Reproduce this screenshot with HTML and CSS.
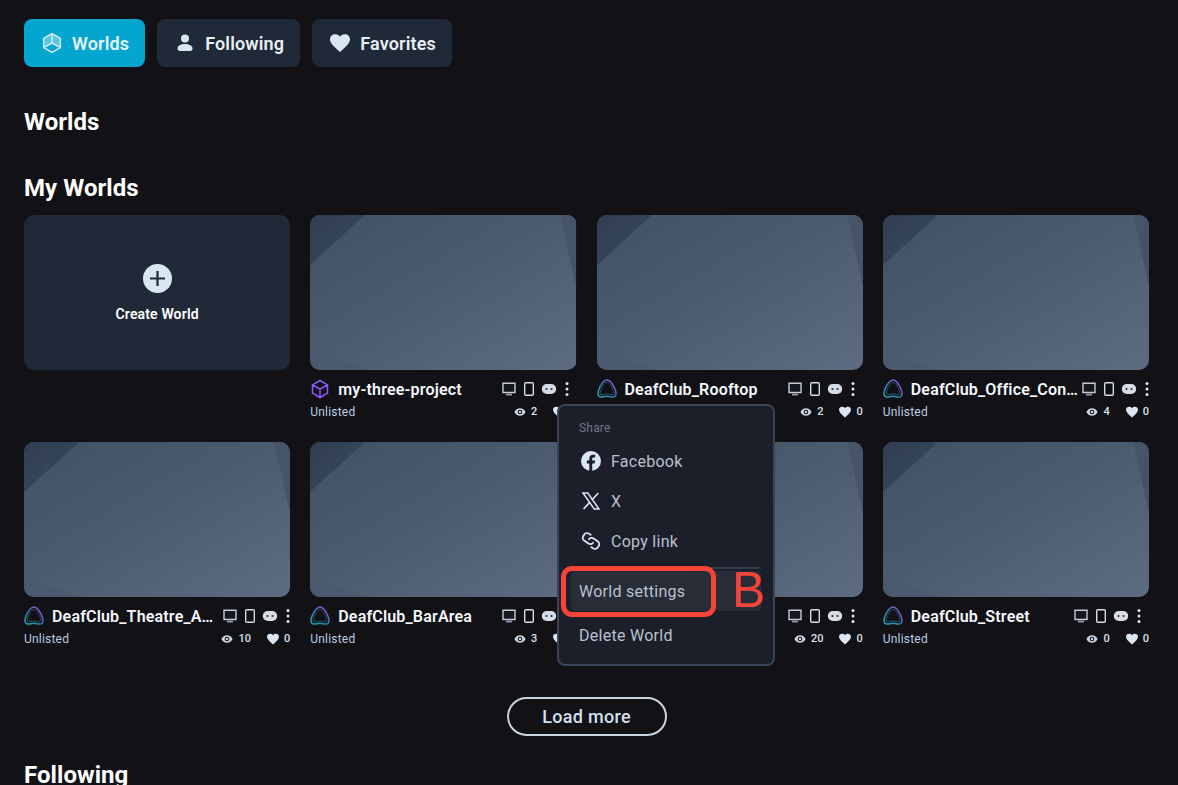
FILE: index.html
```html
<!DOCTYPE html>
<html lang="en">
<head>
    <meta charset="UTF-8">
    <meta name="viewport" content="width=device-width, initial-scale=1.0">
    <title>Worlds</title>
    <link rel="stylesheet" href="styles.css">
</head>
<body>
    <svg class="defs" width="0" height="0" aria-hidden="true">
        <defs>
            <linearGradient id="thumbFill" x1="0" y1="0" x2="1" y2="1">
                <stop offset="0" stop-color="#415062"/>
                <stop offset="0.45" stop-color="#4b5a6c"/>
                <stop offset="1" stop-color="#5e6c82"/>
            </linearGradient>
            <linearGradient id="cornerFill" x1="0" y1="0" x2="1" y2="1">
                <stop offset="0" stop-color="#313e52"/>
                <stop offset="1" stop-color="#3a495c"/>
            </linearGradient>
            <linearGradient id="logoFill" x1="0" y1="1" x2="1" y2="0">
                <stop offset="0" stop-color="#1fa8b8"/>
                <stop offset="0.5" stop-color="#3a7cb0"/>
                <stop offset="1" stop-color="#9a50d8"/>
            </linearGradient>
        </defs>
        <symbol id="thumb" viewBox="0 0 266 155" preserveAspectRatio="none">
            <rect width="266" height="155" fill="url(#thumbFill)"/>
            <polygon points="0,0 55,0 0,50" fill="url(#cornerFill)"/>
            <polygon points="250,0 266,0 266,73" fill="#46546a"/>
            <polygon points="0,135 56,155 0,155" fill="#4a596e"/>
        </symbol>
        <symbol id="logo" viewBox="0 0 20 20">
            <path d="M10 1C6.500 1 4.800 4.500 2.800 8.300 1 11.700 0 15 2 17.300c2 2 5-.1 8-.1s6 2.100 8 .1c2-2.300 1-5.600-.8-9C15.200 4.500 13.500 1 10 1z" fill="none" stroke="url(#logoFill)" stroke-width="1.500"/>
            <path d="M10 3.500C7.500 3.500 6.200 6.500 4.600 9.500 3.300 12 2.600 14 3.600 15.300c1.500 1.200 4-.3 6.400-.3s4.900 1.500 6.400.3c1-1.300.3-3.300-1-5.800C13.800 6.500 12.500 3.500 10 3.500z" fill="none" stroke="url(#logoFill)" stroke-width="0.800" stroke-opacity="0.7"/>
        </symbol>
        <symbol id="cube" viewBox="0 0 20 20">
            <path d="M10 1.500l7.500 4.300v8.400L10 18.500l-7.500-4.300V5.800z M2.500 5.800L10 10l7.500-4.200 M10 10v8.500" fill="none" stroke="#8b5cf6" stroke-width="1.500" stroke-linejoin="round"/>
        </symbol>
        <symbol id="monitor" viewBox="0 0 16 16">
            <path d="M2 2.200h12v9.300H2z" fill="#16181f" stroke="#c3ccd8" stroke-width="1.400"/>
            <path d="M5 12.600h6v1.900H5z" fill="#8d96a3"/>
        </symbol>
        <symbol id="phone" viewBox="0 0 16 16">
            <rect x="3.700" y="1.700" width="8.600" height="12.600" rx="1.200" fill="#0d0e13" stroke="#d5dce6" stroke-width="1.400"/>
        </symbol>
        <symbol id="headset" viewBox="0 0 16 16">
            <rect x="0.800" y="3" width="14.400" height="10" rx="5" fill="#d5dce6"/>
            <circle cx="5.500" cy="8" r="1.100" fill="#2b3340"/>
            <circle cx="10.500" cy="8" r="1.100" fill="#2b3340"/>
        </symbol>
        <symbol id="dots" viewBox="0 0 4 16">
            <circle cx="2" cy="2.500" r="1.500" fill="#e2e8f0"/>
            <circle cx="2" cy="8" r="1.500" fill="#e2e8f0"/>
            <circle cx="2" cy="13.500" r="1.500" fill="#e2e8f0"/>
        </symbol>
        <symbol id="eye" viewBox="0 0 12 12">
            <path d="M6 2.300C3.500 2.300 1.400 3.800.4 6c1 2.200 3.100 3.700 5.600 3.700s4.600-1.500 5.600-3.700c-1-2.200-3.100-3.700-5.600-3.700zm0 6a2.300 2.300 0 1 1 0-4.600 2.300 2.300 0 0 1 0 4.600zM6 4.700a1.300 1.300 0 1 0 0 2.600 1.300 1.300 0 0 0 0-2.600z" fill="#cbd5e1"/>
        </symbol>
        <symbol id="heart" viewBox="1 1 22 21">
            <path d="M12 21.500l-1.600-1.450C4.800 15 1 11.600 1 7.500 1 4.200 3.600 2 6.800 2c1.900 0 3.800.9 5.200 2.500C13.400 2.900 15.300 2 17.200 2 20.400 2 23 4.200 23 7.500c0 4.100-3.800 7.500-9.400 12.550z" fill="#dbe6f3"/>
        </symbol>
    </svg>

    <div class="page">
        <nav class="tabs">
            <a class="tab active">
                <svg class="tab-icon" viewBox="1 1 18 18">
                    <path d="M10 10V1.500l7.500 4.300v8.400zM10 10V1.500L2.500 5.800v8.400z" fill="#ffffff" fill-opacity="0.35"/>
                    <path d="M10 1.500l7.500 4.300v8.400L10 18.500l-7.500-4.300V5.800z M2.500 14.200L10 10l7.500 4.200 M10 10V1.500" fill="none" stroke="#cfeaf5" stroke-width="1.300" stroke-linejoin="round"/>
                </svg>
                Worlds
            </a>
            <a class="tab">
                <svg class="tab-icon" viewBox="0 0 20 20">
                    <circle cx="10" cy="5.500" r="4" fill="#dbe6f3"/>
                    <path d="M2.500 15.500c0-3 3.500-4.500 7.500-4.500s7.500 1.500 7.500 4.500c0 2-1.500 2.500-3 2.500h-9c-1.500 0-3-.5-3-2.500z" fill="#dbe6f3"/>
                </svg>
                Following
            </a>
            <a class="tab">
                <svg class="tab-icon"><use href="#heart"/></svg>
                Favorites
            </a>
        </nav>

        <h2 class="heading first">Worlds</h2>
        <h2 class="heading">My Worlds</h2>

        <div class="grid">
            <div class="card">
                <div class="create">
                    <svg class="plus" viewBox="0 0 29 29">
                        <circle cx="14.500" cy="14.500" r="14.500" fill="#dbe6f3"/>
                        <path d="M14.500 7v15M7 14.500h15" stroke="#1f2937" stroke-width="2.200"/>
                    </svg>
                    <span>Create World</span>
                </div>
            </div>

            <div class="card">
                <svg class="thumb"><use href="#thumb"/></svg>
                <div class="title-row">
                    <svg class="world-icon"><use href="#cube"/></svg>
                    <span class="title">my-three-project</span>
                    <span class="devices">
                        <svg><use href="#monitor"/></svg>
                        <svg><use href="#phone"/></svg>
                        <svg><use href="#headset"/></svg>
                    </span>
                    <svg class="dots"><use href="#dots"/></svg>
                </div>
                <div class="sub-row">
                    <span class="status">Unlisted</span>
                    <span class="stat"><svg><use href="#eye"/></svg>2</span>
                    <span class="stat"><svg><use href="#heart"/></svg>0</span>
                </div>
            </div>

            <div class="card">
                <svg class="thumb"><use href="#thumb"/></svg>
                <div class="title-row">
                    <svg class="world-icon"><use href="#logo"/></svg>
                    <span class="title">DeafClub_Rooftop</span>
                    <span class="devices">
                        <svg><use href="#monitor"/></svg>
                        <svg><use href="#phone"/></svg>
                        <svg><use href="#headset"/></svg>
                    </span>
                    <svg class="dots"><use href="#dots"/></svg>
                </div>
                <div class="sub-row">
                    <span class="status">Unlisted</span>
                    <span class="stat"><svg><use href="#eye"/></svg>2</span>
                    <span class="stat"><svg><use href="#heart"/></svg>0</span>
                </div>
            </div>

            <div class="card">
                <svg class="thumb"><use href="#thumb"/></svg>
                <div class="title-row tight">
                    <svg class="world-icon"><use href="#logo"/></svg>
                    <span class="title">DeafClub_Office_Con…</span>
                    <span class="devices">
                        <svg><use href="#monitor"/></svg>
                        <svg><use href="#phone"/></svg>
                        <svg><use href="#headset"/></svg>
                    </span>
                    <svg class="dots"><use href="#dots"/></svg>
                </div>
                <div class="sub-row">
                    <span class="status">Unlisted</span>
                    <span class="stat"><svg><use href="#eye"/></svg>4</span>
                    <span class="stat"><svg><use href="#heart"/></svg>0</span>
                </div>
            </div>

            <div class="card">
                <svg class="thumb"><use href="#thumb"/></svg>
                <div class="title-row tight">
                    <svg class="world-icon"><use href="#logo"/></svg>
                    <span class="title">DeafClub_Theatre_A…</span>
                    <span class="devices">
                        <svg><use href="#monitor"/></svg>
                        <svg><use href="#phone"/></svg>
                        <svg><use href="#headset"/></svg>
                    </span>
                    <svg class="dots"><use href="#dots"/></svg>
                </div>
                <div class="sub-row">
                    <span class="status">Unlisted</span>
                    <span class="stat"><svg><use href="#eye"/></svg>10</span>
                    <span class="stat"><svg><use href="#heart"/></svg>0</span>
                </div>
            </div>

            <div class="card">
                <svg class="thumb"><use href="#thumb"/></svg>
                <div class="title-row">
                    <svg class="world-icon"><use href="#logo"/></svg>
                    <span class="title">DeafClub_BarArea</span>
                    <span class="devices">
                        <svg><use href="#monitor"/></svg>
                        <svg><use href="#phone"/></svg>
                        <svg><use href="#headset"/></svg>
                    </span>
                    <svg class="dots"><use href="#dots"/></svg>
                </div>
                <div class="sub-row">
                    <span class="status">Unlisted</span>
                    <span class="stat"><svg><use href="#eye"/></svg>3</span>
                    <span class="stat"><svg><use href="#heart"/></svg>0</span>
                </div>
            </div>

            <div class="card">
                <svg class="thumb"><use href="#thumb"/></svg>
                <div class="title-row">
                    <svg class="world-icon"><use href="#logo"/></svg>
                    <span class="title">DeafClub_Lobby</span>
                    <span class="devices">
                        <svg><use href="#monitor"/></svg>
                        <svg><use href="#phone"/></svg>
                        <svg><use href="#headset"/></svg>
                    </span>
                    <svg class="dots"><use href="#dots"/></svg>
                </div>
                <div class="sub-row">
                    <span class="status">Unlisted</span>
                    <span class="stat"><svg><use href="#eye"/></svg>20</span>
                    <span class="stat"><svg><use href="#heart"/></svg>0</span>
                </div>
            </div>

            <div class="card">
                <svg class="thumb"><use href="#thumb"/></svg>
                <div class="title-row">
                    <svg class="world-icon"><use href="#logo"/></svg>
                    <span class="title">DeafClub_Street</span>
                    <span class="devices">
                        <svg><use href="#monitor"/></svg>
                        <svg><use href="#phone"/></svg>
                        <svg><use href="#headset"/></svg>
                    </span>
                    <svg class="dots"><use href="#dots"/></svg>
                </div>
                <div class="sub-row">
                    <span class="status">Unlisted</span>
                    <span class="stat"><svg><use href="#eye"/></svg>0</span>
                    <span class="stat"><svg><use href="#heart"/></svg>0</span>
                </div>
            </div>
        </div>

        <div class="more">
            <button class="load-more" type="button">Load more</button>
        </div>

        <h2 class="heading following">Following</h2>

        <!-- dropdown from the my-three-project card -->
        <div class="menu">
            <div class="menu-label">Share</div>
            <a class="menu-item">
                <svg class="menu-icon" viewBox="0 0 20 20">
                    <circle cx="10" cy="10" r="10" fill="#dbe6f3"/>
                    <path d="M11.200 20v-7.500h2.500l.4-2.900h-2.900V7.800c0-.85.3-1.400 1.500-1.400h1.500V3.800c-.3 0-1.200-.1-2.200-.1-2.200 0-3.700 1.300-3.700 3.800v2.100H5.800v2.900h2.500V20z" fill="#1c1e29"/>
                </svg>
                Facebook
            </a>
            <a class="menu-item">
                <svg class="menu-icon" viewBox="0 0 20 20">
                    <path d="M2 2h4.800l11.200 16h-4.800z" fill="none" stroke="#dbe6f3" stroke-width="1.500"/>
                    <path d="M17.300 2l-6.400 7M9 11.200L2.500 18" stroke="#dbe6f3" stroke-width="1.700" fill="none"/>
                </svg>
                X
            </a>
            <a class="menu-item">
                <svg class="menu-icon" viewBox="0 0 20 20">
                    <path d="M9.700 3.800L8 2.700a3.300 3.300 0 0 0-4.600.7L2.300 5a3.300 3.300 0 0 0 .8 4.600l4.300 3a3.300 3.300 0 0 0 4.600-.8" fill="none" stroke="#dbe6f3" stroke-width="1.800" stroke-linecap="round"/>
                    <path d="M10.300 16.200l1.700 1.100a3.300 3.300 0 0 0 4.600-.7l1.100-1.600a3.300 3.300 0 0 0-.8-4.600l-4.300-3a3.300 3.300 0 0 0-4.600.8" fill="none" stroke="#dbe6f3" stroke-width="1.800" stroke-linecap="round"/>
                </svg>
                Copy link
            </a>
            <div class="menu-divider"></div>
            <a class="menu-item hover">World settings</a>
            <a class="menu-item delete">Delete World</a>
        </div>

        <!-- annotation drawn on top of the screenshot -->
        <div class="mark"></div>
        <div class="mark-letter">B</div>
    </div>
</body>
</html>
```

FILE: styles.css
```css
html, body {
    height: 100%;
    overflow: hidden;
}

body {
    margin: 0;
    background-color: #111116;
    color: #ffffff;
    font-family: Roboto, "Liberation Sans", sans-serif;
}

.defs {
    position: absolute;
}

.page {
    position: relative;
    padding: 19px 29px 0 24px;
}

/* tabs */
.tabs {
    display: flex;
    gap: 12px;
}

.tab {
    display: flex;
    align-items: center;
    gap: 10px;
    height: 48px;
    padding: 0 16px 0 18px;
    box-sizing: border-box;
    border-radius: 8px;
    background-color: #1f2937;
    color: #e8eef6;
    font-size: 18px;
    font-weight: 600;
    letter-spacing: 0.15px;
}

.tab.active {
    background-color: #04a5cf;
    color: #e4f5fb;
}

.tab-icon {
    width: 20px;
    height: 20px;
}

.heading {
    margin: 34px 0 11px;
    font-size: 24px;
    line-height: 32px;
    font-weight: 700;
    letter-spacing: 0.05px;
}

.heading.first {
    margin: 39px 0 0;
}

.heading.following {
    margin: 23px 0 0;
}

/* world cards */
.grid {
    display: grid;
    grid-template-columns: repeat(4, 1fr);
    gap: 21px 20px;
}

.card {
    min-width: 0;
    height: 206px;
}

.thumb {
    display: block;
    width: 100%;
    height: 155px;
    border-radius: 10px;
}

.create {
    display: flex;
    flex-direction: column;
    align-items: center;
    justify-content: center;
    gap: 11px;
    height: 155px;
    padding-top: 3px;
    box-sizing: border-box;
    border-radius: 10px;
    background-color: #1f2937;
    font-size: 14px;
    line-height: 20px;
    font-weight: 600;
    letter-spacing: 0.15px;
}

.plus {
    width: 29px;
    height: 29px;
}

.title-row {
    display: flex;
    align-items: center;
    height: 24px;
    margin-top: 7px;
    padding-right: 8px;
}

.title-row.tight {
    padding-right: 0;
}

.world-icon {
    flex: none;
    width: 20px;
    height: 20px;
    margin-right: 8px;
}

.title {
    flex: 1;
    min-width: 0;
    white-space: nowrap;
    font-size: 16px;
    font-weight: 600;
    letter-spacing: 0.18px;
    color: #f4f7fb;
}

.devices {
    flex: none;
    display: flex;
    gap: 4px;
    margin-right: 8px;
}

.devices svg {
    width: 16px;
    height: 16px;
}

.dots {
    flex: none;
    width: 4px;
    height: 16px;
}

.sub-row {
    display: flex;
    align-items: center;
    gap: 16px;
    height: 20px;
    padding-top: 1px;
    box-sizing: border-box;
    font-size: 12px;
    letter-spacing: 0.2px;
    color: #bccde2;
}

.status {
    flex: 1;
}

.stat {
    display: flex;
    align-items: center;
    gap: 5px;
    font-size: 11px;
    font-weight: 500;
    letter-spacing: 0;
    color: #dbe3ee;
}

.stat svg {
    width: 12px;
    height: 12px;
}

.more {
    display: flex;
    justify-content: center;
    margin-top: 49px;
}

.load-more {
    width: 160px;
    height: 39px;
    border: 2px solid #cbd5e1;
    border-radius: 20px;
    background: none;
    color: #d5e0ee;
    font-family: inherit;
    font-size: 18px;
    font-weight: 500;
    letter-spacing: 0.3px;
}

/* dropdown */
.menu {
    position: absolute;
    left: 557px;
    top: 404px;
    width: 218px;
    box-sizing: border-box;
    padding: 13px 12px 9px;
    border: 2px solid #3a4457;
    border-radius: 8px;
    background-color: #1c1e29;
    color: #b9c1cf;
}

.menu-label {
    height: 18px;
    margin-bottom: 4px;
    padding-left: 8px;
    font-size: 12px;
    line-height: 18px;
    letter-spacing: 0.2px;
    color: #6f7785;
}

.menu-item {
    display: flex;
    align-items: center;
    gap: 10px;
    height: 40px;
    padding-left: 8px;
    border-radius: 4px;
    font-size: 16px;
    letter-spacing: 0.27px;
}

.menu-icon {
    width: 20px;
    height: 20px;
    margin-left: 2px;
}

.menu-divider {
    height: 2px;
    margin: 6px 0 2px;
    background-color: #333a48;
}

.menu-item.hover {
    background-color: #282c37;
}

.menu-item.delete {
    margin-top: 4px;
}

/* red annotation */
.mark {
    position: absolute;
    left: 561px;
    top: 566px;
    width: 155px;
    height: 51px;
    box-sizing: border-box;
    border: 5px solid #f5453a;
    border-radius: 11px;
}

.mark-letter {
    position: absolute;
    left: 732px;
    top: 562px;
    font-family: "Liberation Sans", sans-serif;
    font-size: 50px;
    line-height: 56px;
    color: #f5453a;
}
```
